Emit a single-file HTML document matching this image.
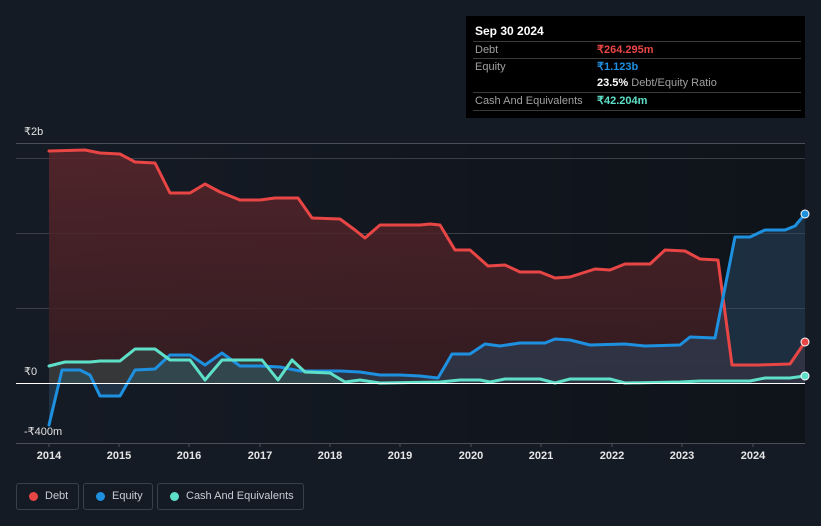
<!DOCTYPE html>
<html><head><meta charset="utf-8"><style>
html,body{margin:0;width:821px;height:526px;overflow:hidden}
body{background:#151b25;font-family:"Liberation Sans",sans-serif;position:relative}
.tt{position:absolute;left:466px;top:16px;width:339px;height:102px;background:#000;box-sizing:border-box}
.tt .h{position:absolute;left:9px;top:8px;color:#fff;font-size:12px;font-weight:bold}
.row{position:absolute;left:7px;width:328px;border-top:1px solid #3a3a3a;font-size:11px;color:#a0a0a0;height:17px;line-height:17px;white-space:nowrap}
.row span.l{position:absolute;left:2px}
.row span.v{position:absolute;left:124px;font-weight:bold}
.lg{position:absolute;top:483px;height:27px;border:1px solid #3a404a;border-radius:3px;box-sizing:border-box;color:#c8ccd2;font-size:11px;line-height:25px;white-space:nowrap}
.lg i{position:absolute;left:12px;top:8px;width:9px;height:9px;border-radius:50%}
.lg span{position:absolute;left:28px}
.yl{position:absolute;color:#e0e0e0;font-size:11px}
.xl{position:absolute;top:450px;color:#e6e6e6;font-size:11px;font-weight:bold;width:40px;text-align:center}
</style></head><body>
<svg width="821" height="526" style="position:absolute;left:0;top:0">
<defs>
<linearGradient id="dg" x1="0" y1="0" x2="0" y2="1"><stop offset="0" stop-color="#5a262b" stop-opacity=".85"/><stop offset="1" stop-color="#3a1d22" stop-opacity=".8"/></linearGradient>
<linearGradient id="sh" x1="0" y1="0" x2="1" y2="0"><stop offset="0" stop-color="#000" stop-opacity="0"/><stop offset=".35" stop-color="#000" stop-opacity=".12"/><stop offset="1" stop-color="#000" stop-opacity=".3"/></linearGradient>
</defs>
<rect x="49" y="143" width="756" height="300" fill="url(#sh)"/>
<g stroke="#3a3f47" stroke-width="1">
<line x1="16" y1="143.5" x2="805" y2="143.5" stroke="#4a4f57"/>
<line x1="16" y1="158.5" x2="805" y2="158.5"/>
<line x1="16" y1="233.5" x2="805" y2="233.5"/>
<line x1="16" y1="308.5" x2="805" y2="308.5"/>
</g>
<polygon fill="url(#dg)" points="49,383 49,151 85,150 100,153 120,154 135,162 155,163 170,193 190,193 205,184 220,192 240,200 260,200 275,198 298,198 312,218 340,219 355,230 365,238 380,225 420,225 430,224 440,225 455,250 470,250 488,266 505,265 520,272 540,272 555,278 570,277 595,269 610,270 625,264 650,264 665,250 685,251 700,259 718,260 732,365 760,365 790,364 805,342 805,383"/>
<polygon fill="#2a4a66" fill-opacity=".5" points="49,383 49,425 62,370 80,370 90,375 100,396 120,396 135,370 155,369 170,355 190,355 205,365 222,353 240,366 260,366 280,367 300,371 320,371 340,371 360,372 380,375 400,375 420,376 438,378 452,354 470,354 485,344 500,346 520,343 545,343 555,339 570,340 590,345 625,344 645,346 680,345 690,337 715,338 735,237 750,237 765,230 785,230 795,226 805,214 805,383"/>
<polygon fill="#3a6a60" fill-opacity=".35" points="49,383 49,366 65,362 90,362 100,361 120,361 135,349 155,349 170,360 190,360 205,380 222,360 262,360 278,380 292,360 305,372 330,373 345,382 360,380 380,383"/>
<g fill="none" stroke-width="3" stroke-linejoin="round" stroke-linecap="round">
<polyline stroke="#e84545" points="49,151 85,150 100,153 120,154 135,162 155,163 170,193 190,193 205,184 220,192 240,200 260,200 275,198 298,198 312,218 340,219 355,230 365,238 380,225 420,225 430,224 440,225 455,250 470,250 488,266 505,265 520,272 540,272 555,278 570,277 595,269 610,270 625,264 650,264 665,250 685,251 700,259 718,260 732,365 760,365 790,364 805,342"/>
<polyline stroke="#1e90e0" points="49,425 62,370 80,370 90,375 100,396 120,396 135,370 155,369 170,355 190,355 205,365 222,353 240,366 260,366 280,367 300,371 320,371 340,371 360,372 380,375 400,375 420,376 438,378 452,354 470,354 485,344 500,346 520,343 545,343 555,339 570,340 590,345 625,344 645,346 680,345 690,337 715,338 735,237 750,237 765,230 785,230 795,226 805,214"/>
<polyline stroke="#5ee0c8" points="49,366 65,362 90,362 100,361 120,361 135,349 155,349 170,360 190,360 205,380 222,360 262,360 278,380 292,360 305,372 330,373 345,382 360,380 380,383 440,382 460,380 480,380 490,382 505,379 540,379 555,383 570,379 610,379 625,383 680,382 700,381 750,381 765,378 790,378 805,376"/>
</g>
<line x1="16" y1="383.5" x2="805" y2="383.5" stroke="#fff" stroke-width="1"/>
<line x1="16" y1="443.5" x2="805" y2="443.5" stroke="#4a4f57"/>
<g stroke="#4a4f57"><line x1="49" y1="443" x2="49" y2="447"/><line x1="119" y1="443" x2="119" y2="447"/><line x1="189" y1="443" x2="189" y2="447"/><line x1="260" y1="443" x2="260" y2="447"/><line x1="330" y1="443" x2="330" y2="447"/><line x1="400" y1="443" x2="400" y2="447"/><line x1="471" y1="443" x2="471" y2="447"/><line x1="541" y1="443" x2="541" y2="447"/><line x1="612" y1="443" x2="612" y2="447"/><line x1="682" y1="443" x2="682" y2="447"/><line x1="753" y1="443" x2="753" y2="447"/></g>
<circle cx="805" cy="214" r="4" fill="#1e90e0" stroke="#fff" stroke-width="1"/>
<circle cx="805" cy="342" r="4" fill="#e84545" stroke="#fff" stroke-width="1"/>
<circle cx="805" cy="376" r="4" fill="#5ee0c8" stroke="#fff" stroke-width="1"/>
</svg>
<div class="yl" style="left:24px;top:125px">₹2b</div>
<div class="yl" style="left:24px;top:365px">₹0</div>
<div class="yl" style="left:24px;top:425px">-₹400m</div>
<div class="xl" style="left:29px">2014</div><div class="xl" style="left:99px">2015</div><div class="xl" style="left:169px">2016</div><div class="xl" style="left:240px">2017</div><div class="xl" style="left:310px">2018</div><div class="xl" style="left:380px">2019</div><div class="xl" style="left:451px">2020</div><div class="xl" style="left:521px">2021</div><div class="xl" style="left:592px">2022</div><div class="xl" style="left:662px">2023</div><div class="xl" style="left:733px">2024</div>
<div class="tt">
<div class="h">Sep 30 2024</div>
<div class="row" style="top:25px"><span class="l">Debt</span><span class="v" style="color:#e84545">₹264.295m</span></div>
<div class="row" style="top:42px"><span class="l">Equity</span><span class="v" style="color:#1e90e0">₹1.123b</span></div>
<div class="row" style="top:59px;border-top:none"><span class="v" style="color:#fff">23.5% <span style="color:#a0a0a0;font-weight:normal">Debt/Equity Ratio</span></span></div>
<div class="row" style="top:76px"><span class="l">Cash And Equivalents</span><span class="v" style="color:#5ee0c8">₹42.204m</span></div>
<div class="row" style="top:94px;height:0"></div>
</div>
<div class="lg" style="left:16px;width:63px"><i style="background:#e84545"></i><span>Debt</span></div>
<div class="lg" style="left:83px;width:70px"><i style="background:#1e90e0"></i><span>Equity</span></div>
<div class="lg" style="left:157px;width:147px"><i style="background:#5ee0c8"></i><span>Cash And Equivalents</span></div>
</body></html>
